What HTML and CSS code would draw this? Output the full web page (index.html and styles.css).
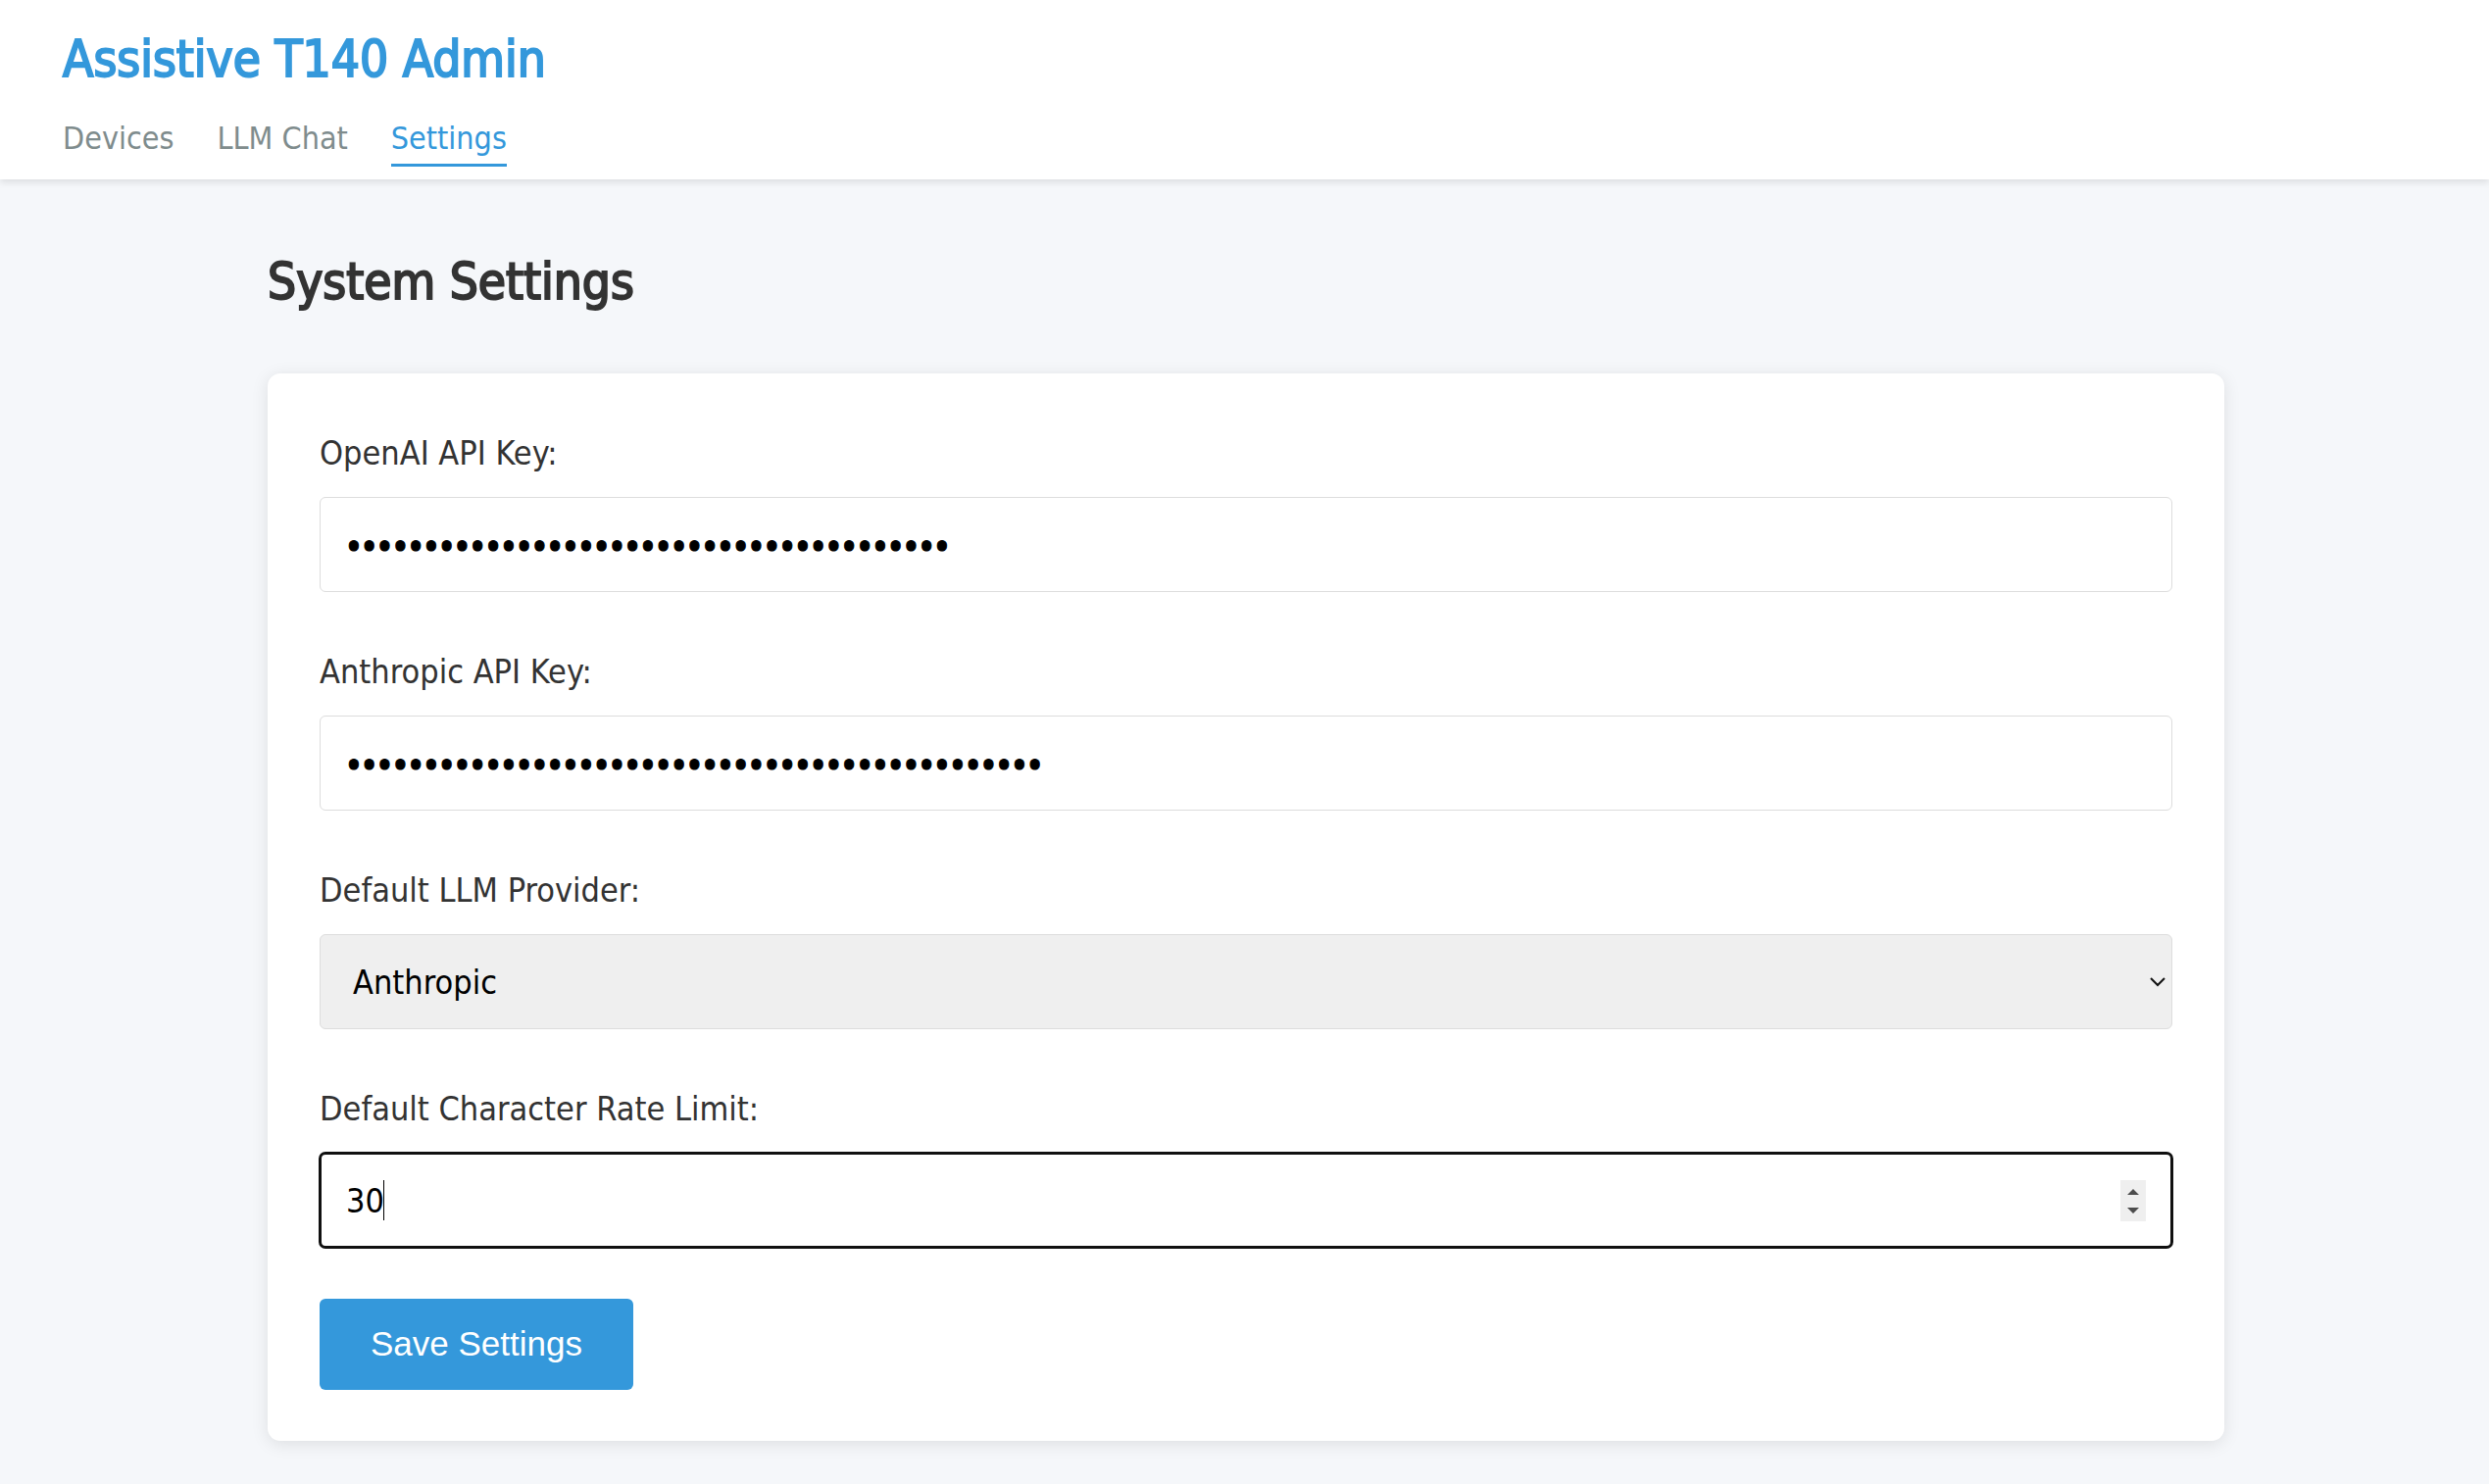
FILE: index.html
```html
<!DOCTYPE html>
<html lang="en">
<head>
<meta charset="utf-8">
<meta name="viewport" content="width=device-width, initial-scale=1">
<title>Assistive T140 Admin</title>
<link rel="stylesheet" href="styles.css">
</head>
<body>
<header class="site-header">
  <h1 class="brand">Assistive T140 Admin</h1>
  <nav class="nav">
    <a class="nav-link" href="#devices">Devices</a>
    <a class="nav-link" href="#chat">LLM Chat</a>
    <a class="nav-link active" href="#settings" aria-current="page">Settings</a>
  </nav>
</header>
<main class="container">
  <h2 class="page-title">System Settings</h2>
  <form class="card">
    <div class="form-group">
      <label for="openai-key">OpenAI API Key:</label>
      <input class="control secret" type="password" id="openai-key" value="000000000000000000000000000000000000000">
    </div>
    <div class="form-group">
      <label for="anthropic-key">Anthropic API Key:</label>
      <input class="control secret" type="password" id="anthropic-key" value="000000000000000000000000000000000000000000000">
    </div>
    <div class="form-group">
      <label for="provider">Default LLM Provider:</label>
      <select class="control select" id="provider">
        <option>OpenAI</option>
        <option selected>Anthropic</option>
      </select>
    </div>
    <div class="form-group">
      <label for="rate-limit">Default Character Rate Limit:</label>
      <div class="number-field">
        <input class="control number" type="number" id="rate-limit" value="30">
        <span class="caret"></span>
      </div>
    </div>
    <button class="save" type="button">Save Settings</button>
  </form>
</main>
</body>
</html>
```
FILE: styles.css
```css
* {
  box-sizing: border-box;
}

body {
  margin: 0;
  background: #f5f7fa;
  color: #333;
  font-family: "DejaVu Sans Condensed", "DejaVu Sans", sans-serif;
  font-size: 34px;
  line-height: 54px;
}

.site-header {
  padding: 27px 64px 13px;
  background: #fff;
  box-shadow: 0 3px 7px rgba(0, 0, 0, 0.1);
}

.brand,
.page-title {
  margin: 0;
  font-size: 51px;
  font-weight: 400;
  line-height: 68px;
  -webkit-text-stroke: 2px currentColor;
}

.brand {
  color: #3498db;
}

.nav {
  display: flex;
  gap: 44px;
  padding-top: 20px;
}

.nav-link {
  border-bottom: 3px solid transparent;
  color: #7f8c8d;
  font-size: 32px;
  line-height: 52px;
  text-decoration: none;
}

.nav-link.active {
  border-color: #3498db;
  color: #3498db;
}

.container {
  max-width: 2103px;
  margin: 0 auto;
  padding: 71px 52px 70px 55px;
}

.page-title {
  margin-bottom: 59px;
}

.card {
  padding: 54px 53px 52px;
  border-radius: 13px;
  background: #fff;
  box-shadow: 0 3px 17px rgba(0, 0, 0, 0.1);
}

.form-group {
  display: flex;
  flex-direction: column;
  gap: 18px;
  margin-bottom: 54px;
}

.form-group:last-of-type {
  margin-bottom: 52px;
}

.control {
  width: 100%;
  height: 97px;
  padding: 0 26px;
  border: 1px solid #ddd;
  border-radius: 6px;
  background: #fff;
  color: #000;
  font: inherit;
}

.secret {
  font-family: "Noto Sans", sans-serif;
  font-size: 42px;
  -webkit-text-stroke: 1px currentColor;
}

.select {
  padding: 0 33px;
  appearance: none;
  background: #efefef url("data:image/svg+xml,%3Csvg xmlns='http://www.w3.org/2000/svg' width='16' height='10'%3E%3Cpath d='M1 1l7 7 7-7' fill='none' stroke='%23111' stroke-width='2'/%3E%3C/svg%3E") no-repeat right 6px center;
}

.number-field {
  position: relative;
}

.number {
  display: block;
  outline: 3px solid #101010;
  outline-offset: -2px;
}

.number::-webkit-inner-spin-button {
  width: 26px;
  height: 42px;
  opacity: 1;
  appearance: none;
  background: #efefef url("data:image/svg+xml,%3Csvg xmlns='http://www.w3.org/2000/svg' width='26' height='42'%3E%3Cpath d='M7 15l6-6 6 6zM7 28l6 6 6-6z' fill='%234d4d4d'/%3E%3C/svg%3E");
}

.caret {
  position: absolute;
  top: 28px;
  left: 65px;
  width: 1px;
  height: 41px;
  background: #000;
}

.save {
  display: block;
  padding: 19px 52px 20px;
  border: 0;
  border-radius: 6px;
  background: #3498db;
  color: #fff;
  font-family: "Liberation Sans", Arial, sans-serif;
  font-size: 35px;
  line-height: 54px;
}
```
